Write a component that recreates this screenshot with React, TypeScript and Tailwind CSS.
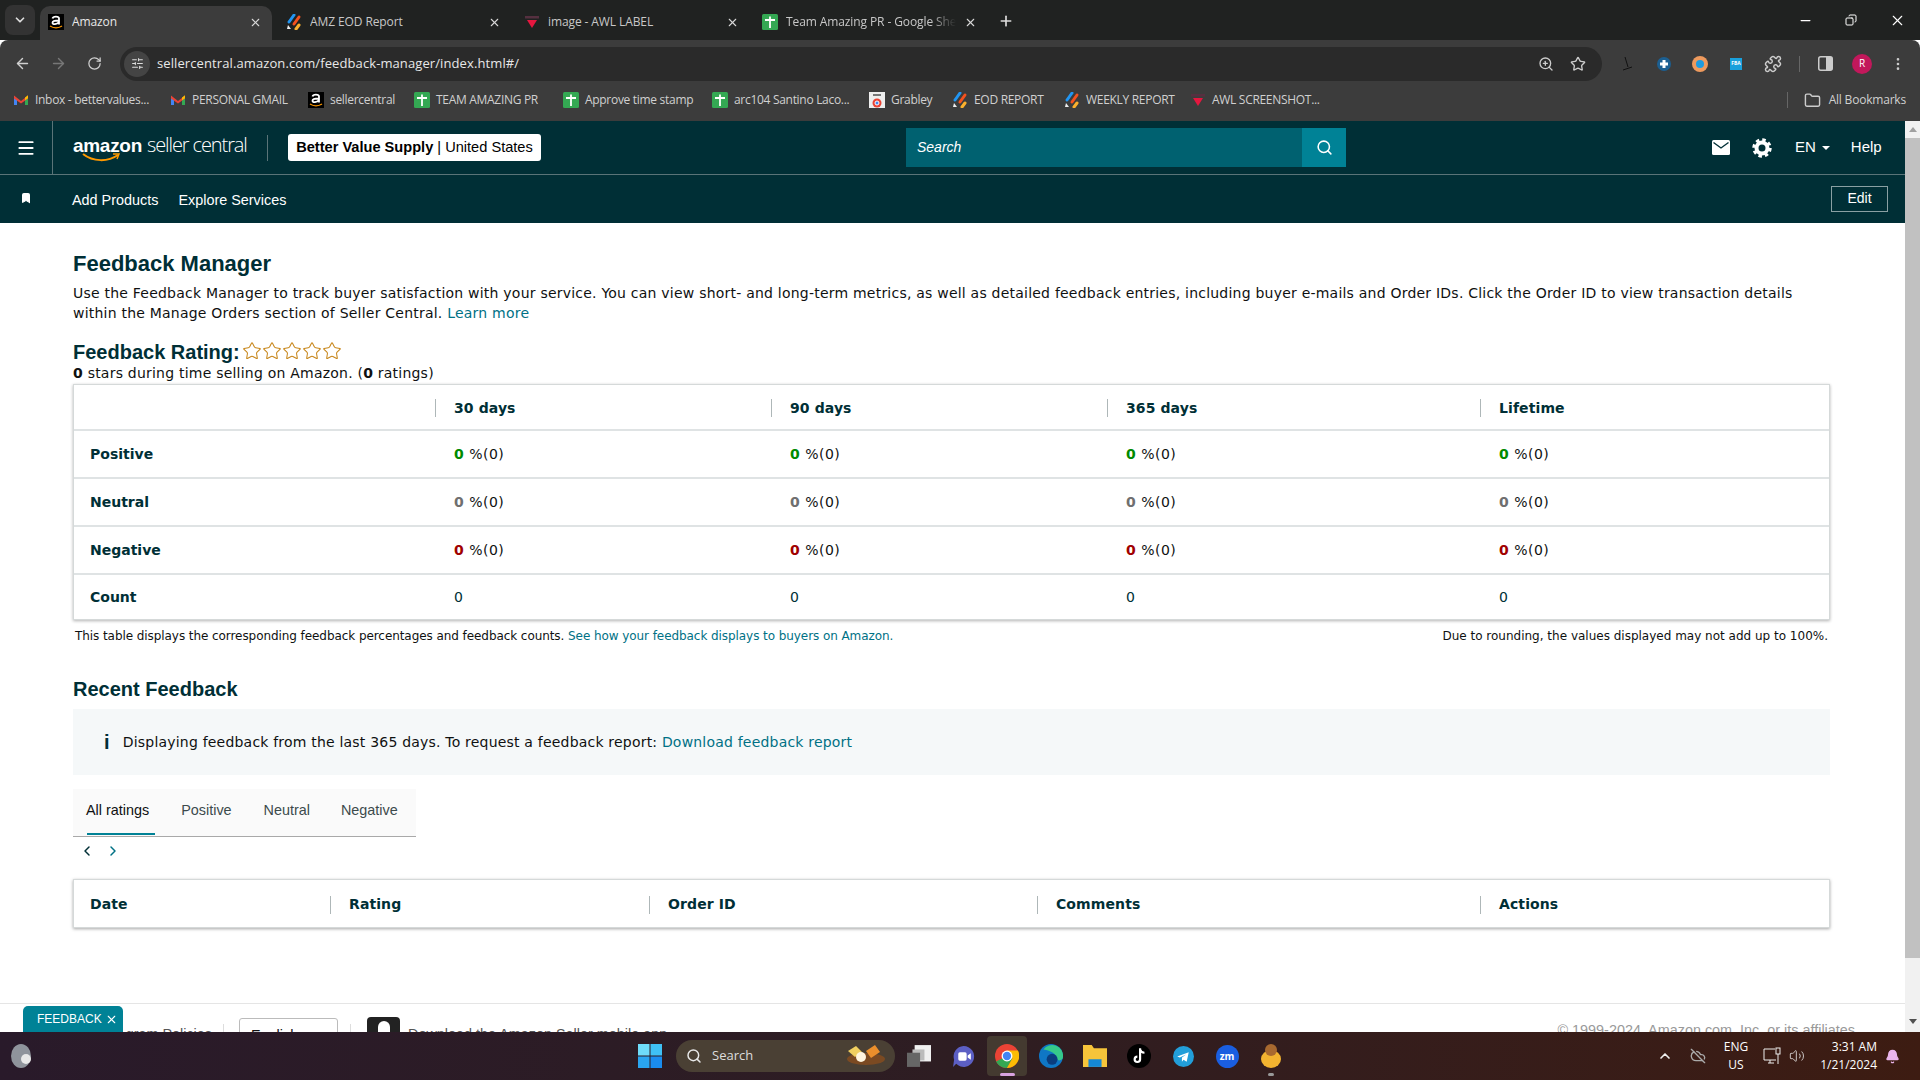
import React from "react";
import { ArrowLeft, ArrowRight, RotateCw, Plus, X, ChevronDown, Star, Puzzle, MoreVertical, Folder, Menu, Bookmark, Search, ChevronLeft, ChevronRight, ZoomIn, ChevronUp, Bell, Volume2, CloudOff, SlidersHorizontal, Minus, Copy } from "lucide-react";

const AIcon = ({ s = 16 }: { s?: number }) => (
  <svg width={s} height={s} viewBox="0 0 16 16" className="shrink-0">
    <rect width="16" height="16" fill="#000" />
    <path d="M4.500 4.500c.5-2.500 6.500-2.500 6.500 0V10.500M11 6.500c-3.500 0-6.500.3-6.500 2.300 0 2.200 4.500 1.700 6.500-.6" stroke="#fff" strokeWidth="1.800" fill="none" />
    <path d="M2 12c3.500 2.300 8.500 2.300 12 0" stroke="#f90" strokeWidth="1.300" fill="none" />
  </svg>
);
const Sheets = ({ s = 16 }: { s?: number }) => (
  <svg width={s} height={s} viewBox="0 0 16 16" className="shrink-0">
    <rect width="16" height="16" rx="1.500" fill="#34a853" />
    <path d="M8 2.500V14M3 6h10" stroke="#fff" strokeWidth="1.800" />
  </svg>
);
const Stripes = ({ s = 16 }: { s?: number }) => (
  <svg width={s} height={s} viewBox="0 0 16 16" className="shrink-0">
    <path d="M3 8l5-7" stroke="#2196f3" strokeWidth="3" strokeLinecap="round" />
    <path d="M8 10l5-7" stroke="#f4511e" strokeWidth="3" strokeLinecap="round" />
    <path d="M10 15l3-4" stroke="#fbb02d" strokeWidth="3" strokeLinecap="round" />
    <path d="M1 15h4l-3-4z" fill="#eee" />
  </svg>
);
const Awl = ({ s = 16 }: { s?: number }) => (
  <svg width={s} height={s} viewBox="0 0 16 16" className="shrink-0">
    <rect x="1" y="2" width="14" height="2.500" fill="#553040" />
    <path d="M3 6h10l-5 8z" fill="#e5173f" />
  </svg>
);
const Gmail = () => (
  <svg width="16" height="16" viewBox="0 0 16 16" className="shrink-0">
    <path d="M1 4v9h3V7z" fill="#4285f4" />
    <path d="M15 4v9h-3V7z" fill="#34a853" />
    <path d="M1 3.500l7 5.500 7-5.500v3l-7 5-7-5z" fill="#ea4335" />
    <path d="M12 5.500l3-2.300v3l-3 2z" fill="#fbbc04" />
  </svg>
);
const Grabley = () => (
  <svg width="16" height="16" viewBox="0 0 16 16" className="shrink-0">
    <rect width="16" height="16" fill="#eee" />
    <rect x="4" y="2" width="8" height="2" fill="#777" />
    <circle cx="8" cy="11" r="4.500" fill="#ea4335" />
    <circle cx="8" cy="11" r="2" fill="#4285f4" stroke="#fff" />
  </svg>
);

const Tab = ({ icon, label, active, fade }: { icon: React.ReactNode; label: string; active?: boolean; fade?: boolean }) => (
  <div className={`relative flex items-center h-[34px] pb-[2px] px-[8px] gap-[8px] ${active ? "bg-[#3c3c3c] rounded-t-[10px] text-[#e8e8e8] w-[232px] mr-[6px]" : "text-[#c8c8c8] w-[238px]"}`}>
    {icon}
    <span className={`text-[12px] flex-1 -mt-[1px] whitespace-nowrap overflow-hidden tracking-[-0.1px] ${fade ? "[mask-image:linear-gradient(to_right,black_85%,transparent)]" : ""}`}>{label}</span>
    <X size={13} strokeWidth={2} className={`text-[#d8d8d8] shrink-0 ${active ? "mr-[2px]" : "mr-[7px]"}`} />
  </div>
);

const BM = ({ icon, label, w }: { icon: React.ReactNode; label: string; w: string }) => (
  <div className={`flex items-center gap-[6px] shrink-0 ${w}`}>
    {icon}
    <span className="text-[12px] text-[#d0d0d0] whitespace-nowrap tracking-[-0.3px]">{label}</span>
  </div>
);

const Pct = ({ color }: { color: string }) => (
  <span className="text-[14px] text-[#0f1111] tracking-[0.5px]"><b className={color}>0</b> %(0)</span>
);

const Row = ({ label, color, border = true }: { label: string; color: string; border?: boolean }) => (
  <div className={`grid grid-cols-[380px_336px_336px_373px_1fr] items-center h-[48px] text-[#002f36] ${border ? "border-b-2 border-[#dfe3e4]" : ""}`}>
    <b className="pl-[16px] text-[14px]">{label}</b>
    <div><Pct color={color} /></div>
    <div><Pct color={color} /></div>
    <div><Pct color={color} /></div>
    <div><Pct color={color} /></div>
  </div>
);

const Head = ({ label, first }: { label?: string; first?: boolean }) => (
  <div className="h-[20px] flex items-center mt-[2px]">
    {!first && <span className="w-px h-[18px] bg-[#aeb7b8] mr-[18px] -ml-[19px]" />}
    <b className="text-[14px] text-[#002f36] tracking-[0.1px]">{label}</b>
  </div>
);

const TB = ({ children }: { children: React.ReactNode }) => (
  <div className="relative w-[44px] h-[44px] flex items-center justify-center">{children}</div>
);

export default function App() {
  return (
    <div className="w-[1920px] h-[1080px] overflow-hidden flex flex-col bg-white font-['DejaVu_Sans',sans-serif]">
      {/* Tab strip */}
      <div className="h-[40px] bg-[#202221] flex items-end pl-[5px] font-['Open_Sans',sans-serif] shrink-0">
        <div className="w-[30px] h-[30px] mb-[5px] mr-[5px] rounded-[8px] bg-[#333] flex items-center justify-center">
          <ChevronDown size={14} color="#ddd" strokeWidth={3} />
        </div>
        <Tab active icon={<AIcon />} label="Amazon" />
        <Tab icon={<Stripes />} label="AMZ EOD Report" />
        <Tab icon={<Awl />} label="image - AWL LABEL" />
        <Tab icon={<Sheets />} label="Team Amazing PR - Google Sheets" fade />
        <Plus size={16} color="#ddd" strokeWidth={2.500} className="mb-[11px] ml-[6px]" />
        <div className="flex-1" />
        <div className="flex items-center h-[40px] text-white">
          <div className="w-[46px] flex justify-center"><Minus size={15} strokeWidth={2} /></div>
          <div className="w-[46px] flex justify-center"><Copy size={12} strokeWidth={2} className="-scale-x-100" /></div>
          <div className="w-[46px] flex justify-center"><X size={17} strokeWidth={1.600} /></div>
        </div>
      </div>
      {/* Toolbar */}
      <div className="h-[41px] bg-[#3c3c3c] rounded-t-[8px] flex items-center pl-[4px] pt-[6px] font-['Open_Sans',sans-serif] shrink-0">
        <div className="w-[36px] flex justify-center"><ArrowLeft size={17} color="#d0d0d0" strokeWidth={2} /></div>
        <div className="w-[36px] flex justify-center"><ArrowRight size={17} color="#777" strokeWidth={2} /></div>
        <div className="w-[36px] flex justify-center"><RotateCw size={15} color="#d0d0d0" strokeWidth={2} /></div>
        <div className="ml-[8px] w-[1482px] h-[34px] bg-[#2a2a2a] rounded-full flex items-center pl-[4px] pr-[16px]">
          <div className="w-[26px] h-[26px] rounded-full bg-[#444] flex items-center justify-center"><SlidersHorizontal size={13} color="#ddd" /></div>
          <span className="ml-[7px] text-[13px] text-[#e8e8e8] tracking-[0.1px]">sellercentral.amazon.com/feedback-manager/index.html#/</span>
          <div className="flex-1" />
          <ZoomIn size={16} color="#ccc" className="mr-[16px]" />
          <Star size={16} color="#ccc" strokeWidth={2} />
        </div>
        <div className="flex items-center">
          <svg width="12" height="16" viewBox="0 0 12 16" className="ml-[20px]"><path d="M3 1l3 10M1 14l9-3" stroke="#111" strokeWidth="1" /></svg>
          <svg width="14" height="14" viewBox="0 0 14 14" className="ml-[23px]"><circle cx="7" cy="7" r="7" fill="#1c5f91" /><path d="M7 3v8M3 7h8" stroke="#fff" strokeWidth="3" /></svg>
          <svg width="16" height="16" viewBox="0 0 16 16" className="ml-[21px]"><circle cx="8" cy="8" r="8" fill="#ee9a5e" /><circle cx="8" cy="8" r="4" fill="#1e9be0" /></svg>
          <div className="w-[12px] h-[12px] bg-[#19a0dc] ml-[22px] flex items-center justify-center text-[5px] font-bold text-white">FBA</div>
          <Puzzle size={18} color="#ccc" className="ml-[22px]" />
          <span className="w-px h-[16px] bg-[#666] ml-[17px]" />
          <svg width="15" height="15" viewBox="0 0 15 15" className="ml-[18px]"><rect x="0.750" y="0.750" width="13.500" height="13.500" rx="2" fill="#3c3c3c" stroke="#ccc" strokeWidth="1.500" /><rect x="8" y="1" width="6" height="13" fill="#ccc" /></svg>
          <div className="w-[20px] h-[20px] rounded-full bg-[#c2185b] text-white text-[10px] flex items-center justify-center ml-[19px]">R</div>
          <MoreVertical size={16} color="#ccc" className="ml-[18px]" />
        </div>
      </div>
      {/* Bookmarks */}
      <div className="h-[40px] pb-[2px] bg-[#3c3c3c] flex items-center pl-[13px] font-['Open_Sans',sans-serif] shrink-0">
        <BM w="w-[157px]" icon={<Gmail />} label="Inbox - bettervalues..." />
        <BM w="w-[138px]" icon={<Gmail />} label="PERSONAL GMAIL" />
        <BM w="w-[106px]" icon={<AIcon />} label="sellercentral" />
        <BM w="w-[149px]" icon={<Sheets />} label="TEAM AMAZING PR" />
        <BM w="w-[149px]" icon={<Sheets />} label="Approve time stamp" />
        <BM w="w-[157px]" icon={<Sheets />} label="arc104 Santino Laco..." />
        <BM w="w-[83px]" icon={<Grabley />} label="Grabley" />
        <BM w="w-[112px]" icon={<Stripes />} label="EOD REPORT" />
        <BM w="w-[126px]" icon={<Stripes />} label="WEEKLY REPORT" />
        <BM w="w-[130px]" icon={<Awl />} label="AWL SCREENSHOT..." />
        <div className="flex-1" />
        <span className="w-px h-[16px] bg-[#666] mr-[16px]" />
        <Folder size={17} color="#ccc" className="mr-[8px]" />
        <span className="text-[12px] text-[#d0d0d0] mr-[14px] tracking-[-0.2px]">All Bookmarks</span>
      </div>
      {/* Page */}
      <div className="relative h-[911px] flex overflow-hidden shrink-0">
        <div className="flex-1 min-w-0 flex flex-col">
          {/* Amazon header */}
          <div className="h-[54px] bg-[#002f36] border-b border-[#5a7478] flex items-center text-white font-['Liberation_Sans',sans-serif] shrink-0">
            <div className="w-[53px] h-full border-r border-[#5a7478] flex items-center justify-center"><Menu size={20} strokeWidth={2.200} /></div>
            <div className="relative ml-[20px] w-[175px] flex items-baseline -mt-[4px] whitespace-nowrap">
              <span className="font-bold text-[19px] tracking-[-0.3px]">amazon</span>
              <span className="font-['Open_Sans',sans-serif] text-[20px] ml-[5px] tracking-[-1.1px] font-light">seller central</span>
              <svg width="38" height="9" viewBox="0 0 38 9" className="absolute left-[9px] top-[23px]"><path d="M1 1c10 8 25 8 35 1" stroke="#f90" strokeWidth="2" fill="none" /><path d="M31 1l6 0-2 5" stroke="#f90" strokeWidth="1.500" fill="none" /></svg>
            </div>
            <span className="ml-[19px] w-px h-[26px] bg-[#5a7478]" />
            <div className="ml-[20px] h-[27px] w-[253px] bg-white rounded-[3px] flex items-center justify-center text-[14.6px] text-black whitespace-nowrap">
              <b>Better Value Supply</b><span>&nbsp;| United States</span>
            </div>
            <div className="ml-[365px] w-[440px] h-[39px] flex bg-[#006170]">
              <span className="flex-1 pl-[11px] self-center italic text-[14px]">Search</span>
              <div className="w-[44px] bg-[#008296] flex items-center justify-center"><Search size={17} strokeWidth={2.200} /></div>
            </div>
            <svg width="18" height="15" viewBox="0 0 18 15" className="ml-[366px]"><rect width="18" height="15" rx="1.500" fill="#fff" /><path d="M1.500 2.500L9 8l7.500-5.500" stroke="#002f36" strokeWidth="1.400" fill="none" /></svg>
            <svg width="20" height="20" viewBox="0 0 20 20" className="ml-[22px]" fill="none" stroke="#fff"><circle cx="10" cy="10" r="5.500" strokeWidth="4" /><circle cx="10" cy="10" r="8.200" strokeWidth="3" strokeDasharray="3.440 3" /></svg>
            <span className="text-[15px] ml-[23px]">EN</span>
            <span className="ml-[6px] border-x-[4px] border-x-transparent border-t-[4px] border-t-white" />
            <span className="text-[15px] ml-[21px]">Help</span>
          </div>
          {/* Sub nav */}
          <div className="h-[48px] pt-[3px] bg-[#002f36] flex items-center text-white text-[14.4px] font-['Liberation_Sans',sans-serif] shrink-0">
            <Bookmark size={12} fill="#fff" className="ml-[20px] -mt-[5px]" />
            <span className="ml-[40px]">Add Products</span>
            <span className="ml-[20px]">Explore Services</span>
            <div className="flex-1" />
            <div className="mr-[17px] -mt-[4px] w-[57px] h-[26px] border border-[#8aa0a3] flex items-center justify-center text-[14px]">Edit</div>
          </div>
          {/* Content */}
          <div className="pl-[73px] pr-[75px] flex-1 flex flex-col">
            <h1 className="mt-[27px] text-[22px] leading-[27px] font-bold text-[#002f36] font-['Liberation_Sans',sans-serif]">Feedback Manager</h1>
            <p className="mt-[6px] text-[14px] leading-[20px] text-[#0f1111] tracking-[0.22px]">
              Use the Feedback Manager to track buyer satisfaction with your service. You can view short- and long-term metrics, as well as detailed feedback entries, including buyer e-mails and Order IDs. Click the Order ID to view transaction details within the Manage Orders section of Seller Central. <span className="text-[#007185]">Learn more</span>
            </p>
            <div className="mt-[17px] flex items-center h-[24px]">
              <span className="text-[20px] font-bold text-[#002f36] font-['Liberation_Sans',sans-serif]">Feedback Rating:</span>
              <div className="ml-[2px] flex -mt-[3px]">
                {[0, 1, 2, 3, 4].map((i) => <Star key={i} size={20} color="#c7861a" strokeWidth={1.250} />)}
              </div>
            </div>
            <p className="text-[14px] leading-[20px] text-[#0f1111] -mt-[1px] tracking-[0.22px]"><b>0</b> stars during time selling on Amazon. (<b>0</b> ratings)</p>
            {/* Metrics */}
            <div className="mt-[1px] border border-[#d5d9d9] shadow-[0_1px_3px_rgba(0,0,0,0.3)] bg-white">
              <div className="grid grid-cols-[380px_336px_336px_373px_1fr] items-center h-[46px] border-b-2 border-[#dfe3e4]">
                <Head first />
                <Head label="30 days" />
                <Head label="90 days" />
                <Head label="365 days" />
                <Head label="Lifetime" />
              </div>
              <Row label="Positive" color="text-[#008a00]" />
              <Row label="Neutral" color="text-[#6f6f6f]" />
              <Row label="Negative" color="text-[#a00000]" />
              <div className="grid grid-cols-[380px_336px_336px_373px_1fr] items-center h-[44px] text-[14px] text-[#002f36]">
                <b className="pl-[16px]">Count</b><span>0</span><span>0</span><span>0</span><span>0</span>
              </div>
            </div>
            <div className="mt-[8px] flex justify-between px-[2px] text-[12px] text-[#0f1111] leading-[16px]">
              <span className="tracking-[-0.07px]">This table displays the corresponding feedback percentages and feedback counts. <span className="text-[#007185]">See how your feedback displays to buyers on Amazon.</span></span>
              <span>Due to rounding, the values displayed may not add up to 100%.</span>
            </div>
            <h2 className="mt-[33px] text-[20px] leading-[24px] font-bold text-[#002f36] font-['Liberation_Sans',sans-serif]">Recent Feedback</h2>
            <div className="mt-[8px] h-[66px] bg-[#f5f8f9] flex items-center pl-[31px] text-[14px] text-[#0f1111] tracking-[0.2px]">
              <span className="font-bold text-[#002f36] font-['Liberation_Sans',sans-serif] text-[20px] mr-[13px]">i</span>
              <span>Displaying feedback from the last 365 days. To request a feedback report: <span className="text-[#007185]">Download feedback report</span></span>
            </div>
            <div className="mt-[14px] w-[343px] h-[48px] pb-[4px] bg-[#fafafa] border-b border-[#a9a9a9] flex items-center text-[14.4px] font-['Liberation_Sans',sans-serif] text-[#3c4a4c] relative">
              <span className="ml-[13px] text-[#0f1111]">All ratings</span>
              <span className="ml-[32px]">Positive</span>
              <span className="ml-[32px]">Neutral</span>
              <span className="ml-[31px]">Negative</span>
              <span className="absolute left-[14px] bottom-[1px] w-[68px] h-[2px] bg-[#008296]" />
            </div>
            <div className="mt-[6px] flex gap-[10px] pl-[6px] text-[#002f36]">
              <ChevronLeft size={16} strokeWidth={2.200} />
              <ChevronRight size={16} strokeWidth={2.200} className="text-[#007185]" />
            </div>
            {/* Feedback table */}
            <div className="mt-[20px] h-[49px] border border-[#d5d9d9] shadow-[0_1px_3px_rgba(0,0,0,0.35)] grid grid-cols-[275px_319px_388px_443px_1fr] items-center shrink-0">
              <b className="pl-[16px] mt-[2px] text-[14px] text-[#002f36] tracking-[0.1px]">Date</b>
              <Head label="Rating" />
              <Head label="Order ID" />
              <Head label="Comments" />
              <Head label="Actions" />
            </div>
            {/* Footer */}
            <div className="mt-[75px] -ml-[73px] -mr-[75px] border-t border-[#e5e5e5] h-[60px] shrink-0 flex items-start font-['Liberation_Sans',sans-serif] text-[14.4px] text-[#555]">
              <span className="w-[212px] text-right mt-[20px] whitespace-nowrap">gram Policies</span>
              <span className="ml-[11px] mt-[20px] h-[30px] w-px bg-[#ddd]" />
              <div className="ml-[15px] mt-[14px] w-[99px] h-[30px] border border-[#bbb] rounded-[3px] px-[11px] pt-[6px] text-[#111] flex justify-between">English<ChevronDown size={14} strokeWidth={3} className="mt-[3px]" /></div>
              <span className="ml-[12px] mt-[20px] h-[30px] w-px bg-[#ddd]" />
              <div className="ml-[16px] mt-[13px] w-[33px] h-[34px] bg-[#222] rounded-[4px] flex items-start justify-center pt-[4px]"><span className="w-[12px] h-[14px] bg-white rounded-t-full" /></div>
              <span className="ml-[8px] mt-[20px]">Download the Amazon Seller mobile app</span>
              <div className="flex-1" />
              <span className="mr-[50px] mt-[16px] text-[#999]">© 1999-2024, Amazon.com, Inc. or its affiliates</span>
            </div>
          </div>
        </div>
        {/* Scrollbar */}
        <div className="w-[15px] bg-[#f1f1f1] flex flex-col items-center shrink-0">
          <span className="mt-[6px] border-x-[4px] border-x-transparent border-b-[5px] border-b-[#a0a0a0]" />
          <div className="mt-[6px] w-full h-[820px] bg-[#c1c1c1]" />
          <div className="flex-1" />
          <span className="mb-[8px] border-x-[4px] border-x-transparent border-t-[5px] border-t-[#505050]" />
        </div>
        {/* Feedback tab */}
        <div className="absolute left-[23px] bottom-0 w-[100px] h-[26px] pl-[8px] bg-[#008296] rounded-t-[5px] flex items-center gap-[3px] text-white text-[12px] font-['Liberation_Sans',sans-serif]">
          <span className="ml-[6px]">FEEDBACK</span> <X size={13} />
        </div>
      </div>
      {/* Taskbar */}
      <div className="h-[48px] shrink-0 bg-gradient-to-r from-[#291a2a] via-[#2e1d22] to-[#3d1c12] flex items-center relative font-['Open_Sans',sans-serif] text-white">
        <svg width="24" height="28" viewBox="0 0 24 28" className="ml-[11px]"><ellipse cx="10" cy="14" rx="10" ry="12" fill="#8f949c" /><circle cx="15" cy="17" r="5" fill="#e8e8e8" /></svg>
        <div className="ml-[603px]"><svg width="24" height="24" viewBox="0 0 24 24" className="block"><rect x="0" y="0" width="11.500" height="11.500" fill="#6fdcf9" /><rect x="12.500" y="0" width="11.500" height="11.500" fill="#3fc0f5" /><rect x="0" y="12.500" width="11.500" height="11.500" fill="#2aa5f0" /><rect x="12.500" y="12.500" width="11.500" height="11.500" fill="#1a8cef" /></svg></div>
        <div className="ml-[14px] w-[219px] h-[32px] rounded-full bg-[#4a4034] flex items-center pl-[10px] relative">
          <Search size={16} color="#e8e8e8" strokeWidth={2.200} />
          <span className="ml-[10px] text-[13px] text-[#ddd]">Search</span>
          <svg width="48" height="24" viewBox="0 0 44 24" className="absolute right-[5px] top-[3px]"><ellipse cx="22" cy="16" rx="19" ry="6" fill="#7b4a22" /><path d="M4 8l8-5 6 6-7 5z" fill="#f0cf60" /><path d="M22 8l9-6 5 7-9 6z" fill="#eb8f2c" /><circle cx="17" cy="14" r="5" fill="#fff5df" /></svg>
        </div>
        <div className="ml-[2px] flex items-center">
          <TB><svg width="24" height="24" viewBox="0 0 22 22"><rect x="7" y="1" width="15" height="15" fill="#f0f0f0" /><rect x="5" y="5" width="11" height="10" fill="#bbb" /><rect x="0" y="8" width="12" height="13" fill="#666" /></svg></TB>
          <TB><svg width="23" height="23" viewBox="0 0 22 22"><path d="M11 1a10 10 0 1 1-7 17l-3 3 1-7A10 10 0 0 1 11 1z" fill="#5c5fc4" /><rect x="6" y="7" width="8" height="8" rx="1.500" fill="#fff" /><path d="M15 10l3-2v6l-3-2z" fill="#fff" /></svg></TB>
          <TB>
            <div className="absolute left-[2px] top-[2px] w-[40px] h-[40px] bg-[#443a30] rounded-[4px]" />
            <svg width="24" height="24" viewBox="0 0 22 22" className="relative"><circle cx="11" cy="11" r="11" fill="#ea4335" /><path d="M11 11L1 16a11 11 0 0 0 10 6l5-9z" fill="#34a853" /><path d="M11 6h10a11 11 0 0 1-10 16l5-9z" fill="#fbbc04" /><circle cx="11" cy="11" r="5" fill="#fff" /><circle cx="11" cy="11" r="3.800" fill="#4285f4" /></svg>
            <span className="absolute bottom-[2px] left-[15px] w-[15px] h-[3px] rounded bg-[#d9a2e0]" />
          </TB>
          <TB><svg width="24" height="24" viewBox="0 0 22 22"><circle cx="11" cy="11" r="11" fill="#0f77c5" /><path d="M4 5a10 10 0 0 1 18 7c0 3-4 4-6 2 1-4-4-8-12-9z" fill="#36c98a" /><circle cx="12" cy="14" r="5" fill="#0a3d7e" /></svg></TB>
          <TB><svg width="24" height="22" viewBox="0 0 22 20"><path d="M0 0h8l2 3h12v17H0z" fill="#f6c43a" /><rect x="5" y="13" width="12" height="7" fill="#1487d4" /></svg></TB>
          <TB><svg width="24" height="24" viewBox="0 0 22 22"><circle cx="11" cy="11" r="11" fill="#000" /><path d="M12 4v10a2.500 2.500 0 1 1-2.500-2.500M12 5c.5 2 2 3 4 3" stroke="#fff" strokeWidth="2" fill="none" /></svg></TB>
          <TB><svg width="21" height="21" viewBox="0 0 20 20"><circle cx="10" cy="10" r="10" fill="#229ed9" /><path d="M4 10l11-4-2 9-3-2-1.500 2V11l4-3-6 3z" fill="#fff" /></svg></TB>
          <TB><div className="w-[23px] h-[23px] rounded-full bg-[#1a5ee0] flex items-center justify-center text-[10px] font-bold">zm</div></TB>
          <TB>
            <svg width="22" height="26" viewBox="0 0 22 26"><ellipse cx="11" cy="16" rx="10" ry="9" fill="#f2b330" /><circle cx="11" cy="7" r="6" fill="#a8692f" /></svg>
            <span className="absolute bottom-[2px] left-[19px] w-[6px] h-[3px] rounded bg-[#999]" />
          </TB>
        </div>
        <div className="flex-1" />
        <ChevronUp size={16} color="#eee" strokeWidth={2.500} className="mr-[17px]" />
        <CloudOff size={16} color="#aaa" className="mr-[15px]" />
        <div className="text-[12px] text-center leading-[18px] mr-[12px] w-[30px]">ENG<br />US</div>
        <svg width="18" height="18" viewBox="0 0 18 18" className="mr-[8px]" fill="none" stroke="#eee" strokeWidth="1"><path d="M12 2H1v11h12M5 16h6M7 13v3" /><rect x="13" y="1" width="4" height="6" /><path d="M15 7v10" /></svg>
        <Volume2 size={16} color="#eee" strokeWidth={1.200} className="mr-[12px]" />
        <div className="text-[12px] text-right leading-[18px] w-[60px] whitespace-nowrap">3:31 AM<br />1/21/2024</div>
        <Bell size={15} color="#eab5ec" fill="#eab5ec" className="ml-[8px] mr-[20px]" />
      </div>
    </div>
  );
}
